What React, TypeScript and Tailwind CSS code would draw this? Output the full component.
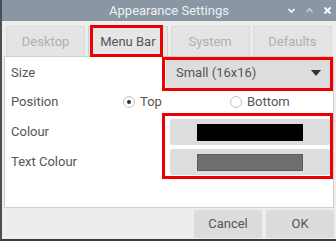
import React from "react";

export default function App() {
  const font = { fontFamily: "Roboto, 'Liberation Sans', sans-serif" };
  return (
    <div className="relative w-[336px] h-[241px] bg-[#ededed] overflow-hidden text-[13px] text-[#555555]" style={font}>
      <div className="flex flex-col h-full border-l-2 border-l-[#4a4f55] border-b-2 border-b-[#3a3a3a]">
        {/* title bar */}
        <div className="relative h-[21px] shrink-0 bg-[#8a96a3] flex items-center justify-center text-[#eef1f4] text-[13px]">
          <span>Appearance Settings</span>
          <div className="absolute right-[4px] top-0 h-full flex items-center gap-[9px] text-white">
            <svg width="9" height="9" viewBox="0 0 9 9"><path d="M1.5 3 L4.5 6 L7.5 3" stroke="#ffffff" strokeWidth="1.6" fill="none" /></svg>
            <svg width="9" height="9" viewBox="0 0 9 9"><path d="M1.5 6 L4.5 3 L7.5 6" stroke="#c8cfd6" strokeWidth="1.6" fill="none" /></svg>
            <svg width="9" height="9" viewBox="0 0 9 9"><path d="M1.5 1.5 L7.5 7.5 M7.5 1.5 L1.5 7.5" stroke="#ffffff" strokeWidth="1.8" fill="none" /></svg>
          </div>
        </div>
        {/* tabs */}
        <div className="flex px-[4px] pt-[5px] gap-[3px] h-[35px] shrink-0">
          <div className="flex-1 flex items-center justify-center bg-[#e4e4e4] text-[#b0b0b0] border border-[#dadada] border-b-0">Desktop</div>
          <div className="flex-1 flex items-center justify-center bg-[#e6e6e6] text-[#555] border border-[#d2d2d2] border-b-0">Menu Bar</div>
          <div className="flex-1 flex items-center justify-center bg-[#e4e4e4] text-[#b0b0b0] border border-[#dadada] border-b-0">System</div>
          <div className="flex-1 flex items-center justify-center bg-[#e4e4e4] text-[#b0b0b0] border border-[#dadada] border-b-0">Defaults</div>
        </div>
        {/* content */}
        <div className="mx-[2px] h-[152px] shrink-0 bg-white border border-[#cfcfcf] flex flex-col pl-[6px] pr-[1px] pt-[1px]">
          <div className="flex items-center h-[30px]">
            <span className="w-[155px]">Size</span>
            <div className="flex-1 h-[29px] bg-[#dddddd] rounded-[2px] flex items-center justify-between pl-[10px] pr-[11px]">
              <span>Small (16x16)</span>
              <svg width="10" height="6" viewBox="0 0 10 6"><path d="M0 0 H10 L5 6 Z" fill="#333" /></svg>
            </div>
          </div>
          <div className="flex items-center h-[28px]">
            <span className="w-[112px]">Position</span>
            <div className="flex items-center gap-[5px] w-[107px]">
              <span className="w-[12px] h-[12px] rounded-full border border-[#c4c4c4] flex items-center justify-center">
                <span className="w-[4px] h-[4px] rounded-full bg-[#333]"></span>
              </span>
              <span>Top</span>
            </div>
            <div className="flex items-center gap-[5px]">
              <span className="w-[12px] h-[12px] rounded-full border border-[#c4c4c4]"></span>
              <span>Bottom</span>
            </div>
          </div>
          <div className="flex items-center h-[28px] mt-[2px] pr-[2px]">
            <span className="w-[159px]">Colour</span>
            <div className="flex-1 h-[26px] bg-[#dddddd] rounded-[2px] flex items-center justify-center">
              <div className="w-[106px] h-[17px] bg-black"></div>
            </div>
          </div>
          <div className="flex items-center h-[28px] mt-[2px] pr-[2px]">
            <span className="w-[159px]">Text Colour</span>
            <div className="flex-1 h-[26px] bg-[#dddddd] rounded-[2px] flex items-center justify-center">
              <div className="w-[106px] h-[17px] bg-[#6f6f6f] border border-[#5c5c5c]"></div>
            </div>
          </div>
        </div>
        {/* buttons */}
        <div className="flex-1 flex justify-end items-center gap-[4px] pr-[2px]">
          <div className="w-[68px] h-[28px] bg-[#dcdcdc] rounded-[2px] flex items-center justify-center">Cancel</div>
          <div className="w-[68px] h-[28px] bg-[#dcdcdc] rounded-[2px] flex items-center justify-center">OK</div>
        </div>
      </div>
      {/* red annotations */}
      <div className="absolute left-[90px] top-[25px] w-[73px] h-[32px] border-[3px] border-[#ee0000]"></div>
      <div className="absolute left-[162px] top-[57px] w-[171px] h-[34px] border-[3px] border-[#ee0000]"></div>
      <div className="absolute left-[162px] top-[113px] w-[171px] h-[66px] border-[3px] border-[#ee0000]"></div>
    </div>
  );
}
